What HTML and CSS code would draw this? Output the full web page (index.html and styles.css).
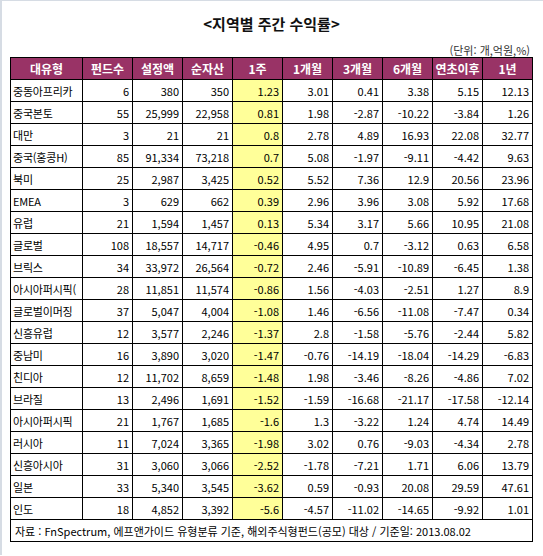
FILE: index.html
```html
<!DOCTYPE html>
<html lang="ko">
<head>
    <meta charset="UTF-8">
    <title>지역별 주간 수익률</title>
    <link rel="stylesheet" href="styles.css">
</head>
<body>
    <div class="frame">
        <h1 class="title">&lt;지역별 주간 수익률&gt;</h1>
        <div class="sheet">
            <div class="unit">(단위: 개,억원,%)</div>
            <table class="returns">
                <colgroup>
                    <col class="col-name">
                    <col span="9" class="col-num">
                </colgroup>
                <thead>
                    <tr>
                        <th>대유형</th><th>펀드수</th><th>설정액</th><th>순자산</th><th>1주</th>
                        <th>1개월</th><th>3개월</th><th>6개월</th><th>연초이후</th><th>1년</th>
                    </tr>
                </thead>
                <tbody>
                    <tr><td class="name">중동아프리카</td><td>6</td><td>380</td><td>350</td><td class="week">1.23</td><td>3.01</td><td>0.41</td><td>3.38</td><td>5.15</td><td>12.13</td></tr>
                    <tr><td class="name">중국본토</td><td>55</td><td>25,999</td><td>22,958</td><td class="week">0.81</td><td>1.98</td><td>-2.87</td><td>-10.22</td><td>-3.84</td><td>1.26</td></tr>
                    <tr><td class="name">대만</td><td>3</td><td>21</td><td>21</td><td class="week">0.8</td><td>2.78</td><td>4.89</td><td>16.93</td><td>22.08</td><td>32.77</td></tr>
                    <tr><td class="name">중국(홍콩H)</td><td>85</td><td>91,334</td><td>73,218</td><td class="week">0.7</td><td>5.08</td><td>-1.97</td><td>-9.11</td><td>-4.42</td><td>9.63</td></tr>
                    <tr><td class="name">북미</td><td>25</td><td>2,987</td><td>3,425</td><td class="week">0.52</td><td>5.52</td><td>7.36</td><td>12.9</td><td>20.56</td><td>23.96</td></tr>
                    <tr><td class="name">EMEA</td><td>3</td><td>629</td><td>662</td><td class="week">0.39</td><td>2.96</td><td>3.96</td><td>3.08</td><td>5.92</td><td>17.68</td></tr>
                    <tr><td class="name">유럽</td><td>21</td><td>1,594</td><td>1,457</td><td class="week">0.13</td><td>5.34</td><td>3.17</td><td>5.66</td><td>10.95</td><td>21.08</td></tr>
                    <tr><td class="name">글로벌</td><td>108</td><td>18,557</td><td>14,717</td><td class="week">-0.46</td><td>4.95</td><td>0.7</td><td>-3.12</td><td>0.63</td><td>6.58</td></tr>
                    <tr><td class="name">브릭스</td><td>34</td><td>33,972</td><td>26,564</td><td class="week">-0.72</td><td>2.46</td><td>-5.91</td><td>-10.89</td><td>-6.45</td><td>1.38</td></tr>
                    <tr><td class="name">아시아퍼시픽(</td><td>28</td><td>11,851</td><td>11,574</td><td class="week">-0.86</td><td>1.56</td><td>-4.03</td><td>-2.51</td><td>1.27</td><td>8.9</td></tr>
                    <tr><td class="name">글로벌이머징</td><td>37</td><td>5,047</td><td>4,004</td><td class="week">-1.08</td><td>1.46</td><td>-6.56</td><td>-11.08</td><td>-7.47</td><td>0.34</td></tr>
                    <tr><td class="name">신흥유럽</td><td>12</td><td>3,577</td><td>2,246</td><td class="week">-1.37</td><td>2.8</td><td>-1.58</td><td>-5.76</td><td>-2.44</td><td>5.82</td></tr>
                    <tr><td class="name">중남미</td><td>16</td><td>3,890</td><td>3,020</td><td class="week">-1.47</td><td>-0.76</td><td>-14.19</td><td>-18.04</td><td>-14.29</td><td>-6.83</td></tr>
                    <tr><td class="name">친디아</td><td>12</td><td>11,702</td><td>8,659</td><td class="week">-1.48</td><td>1.98</td><td>-3.46</td><td>-8.26</td><td>-4.86</td><td>7.02</td></tr>
                    <tr><td class="name">브라질</td><td>13</td><td>2,496</td><td>1,691</td><td class="week">-1.52</td><td>-1.59</td><td>-16.68</td><td>-21.17</td><td>-17.58</td><td>-12.14</td></tr>
                    <tr><td class="name">아시아퍼시픽</td><td>21</td><td>1,767</td><td>1,685</td><td class="week">-1.6</td><td>1.3</td><td>-3.22</td><td>1.24</td><td>4.74</td><td>14.49</td></tr>
                    <tr><td class="name">러시아</td><td>11</td><td>7,024</td><td>3,365</td><td class="week">-1.98</td><td>3.02</td><td>0.76</td><td>-9.03</td><td>-4.34</td><td>2.78</td></tr>
                    <tr><td class="name">신흥아시아</td><td>31</td><td>3,060</td><td>3,066</td><td class="week">-2.52</td><td>-1.78</td><td>-7.21</td><td>1.71</td><td>6.06</td><td>13.79</td></tr>
                    <tr><td class="name">일본</td><td>33</td><td>5,340</td><td>3,545</td><td class="week">-3.62</td><td>0.59</td><td>-0.93</td><td>20.08</td><td>29.59</td><td>47.61</td></tr>
                    <tr><td class="name">인도</td><td>18</td><td>4,852</td><td>3,392</td><td class="week">-5.6</td><td>-4.57</td><td>-11.02</td><td>-14.65</td><td>-9.92</td><td>1.01</td></tr>
                </tbody>
                <tfoot>
                    <tr>
                        <td colspan="10" class="source">자료 : FnSpectrum, 에프앤가이드 유형분류 기준, 해외주식형펀드(공모) 대상 / 기준일: 2013.08.02</td>
                    </tr>
                </tfoot>
            </table>
        </div>
    </div>
</body>
</html>
```

FILE: styles.css
```css
body {
    margin: 0;
    background: #fff;
    font-family: "Noto Sans CJK KR", "Noto Sans", sans-serif;
    color: #000;
}

.frame {
    height: 555px;
    border-top: 1px solid #d6dce4;
    border-left: 2px solid #d6dce4;
    padding: 13px 0 0 8px;
    box-sizing: border-box;
}

.title {
    margin: 0;
    width: 523px;
    height: 20px;
    line-height: 20px;
    text-align: center;
    font-size: 15px;
    font-weight: bold;
    color: #111;
}

.sheet {
    width: 523px;
    margin-top: 10px;
}

.unit {
    height: 13px;
    line-height: 13px;
    padding-right: 3px;
    text-align: right;
    font-size: 11px;
    color: #333;
}

.returns {
    width: 523px;
    table-layout: fixed;
    border-collapse: collapse;
    font-size: 11px;
}

.col-name {
    width: 72px;
}

.col-num {
    width: 50px;
}

.returns th,
.returns td {
    height: 21px;
    padding: 0 3px;
    border: 1px solid #000;
    white-space: nowrap;
    overflow: hidden;
    vertical-align: middle;
}

.returns th {
    background: #993366;
    color: #fff;
    font-size: 12px;
    font-weight: bold;
    text-align: center;
    padding: 0;
}

.returns td {
    text-align: right;
}

.returns td.name {
    text-align: left;
    padding: 0 0 0 2px;
    letter-spacing: -0.2px;
}

.returns td.week {
    background: #ffff99;
}

.returns td.source {
    text-align: left;
    padding-left: 4px;
}
```
